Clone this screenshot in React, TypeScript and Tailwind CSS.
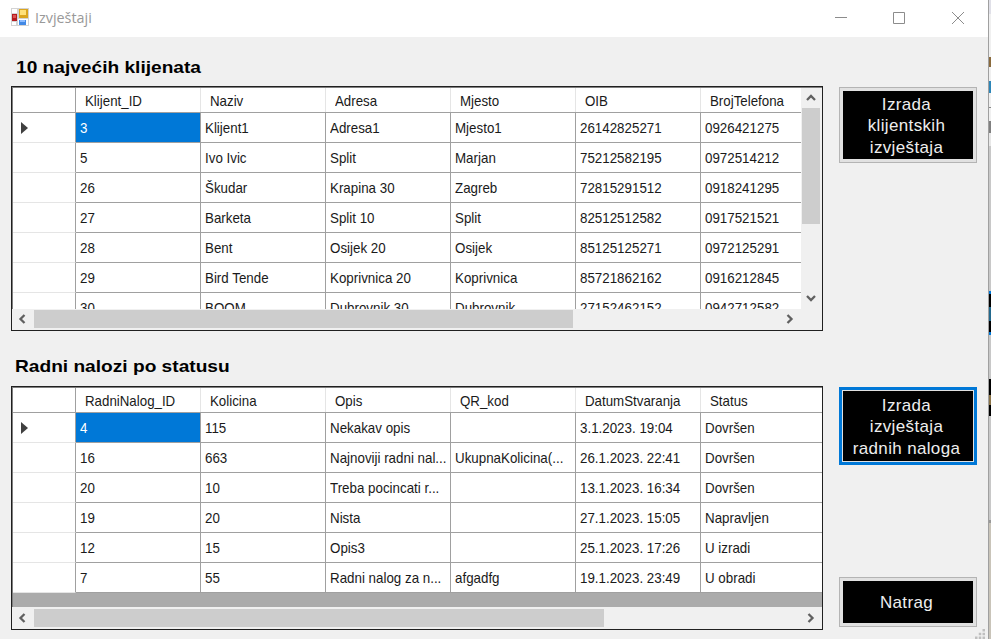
import type { ReactNode } from "react";

const clients = [
  ["3", "Klijent1", "Adresa1", "Mjesto1", "26142825271", "0926421275"],
  ["5", "Ivo Ivic", "Split", "Marjan", "75212582195", "0972514212"],
  ["26", "Škudar", "Krapina 30", "Zagreb", "72815291512", "0918241295"],
  ["27", "Barketa", "Split 10", "Split", "82512512582", "0917521521"],
  ["28", "Bent", "Osijek 20", "Osijek", "85125125271", "0972125291"],
  ["29", "Bird Tende", "Koprivnica 20", "Koprivnica", "85721862162", "0916212845"],
  ["30", "BOOM", "Dubrovnik 30", "Dubrovnik", "27152462152", "0942712582"],
];

const orders = [
  ["4", "115", "Nekakav opis", "", "3.1.2023. 19:04", "Dovršen"],
  ["16", "663", "Najnoviji radni nal...", "UkupnaKolicina(...", "26.1.2023. 22:41", "Dovršen"],
  ["20", "10", "Treba pocincati r...", "", "13.1.2023. 16:34", "Dovršen"],
  ["19", "20", "Nista", "", "27.1.2023. 15:05", "Napravljen"],
  ["12", "15", "Opis3", "", "25.1.2023. 17:26", "U izradi"],
  ["7", "55", "Radni nalog za n...", "afgadfg", "19.1.2023. 23:49", "U obradi"],
];

function Chevron({ dir }: { dir: "left" | "right" | "up" | "down" }) {
  const d = {
    left: "M8.5 2 4.5 6l4 4",
    right: "M3.5 2l4 4-4 4",
    up: "M2 8l4-4 4 4",
    down: "M2 4l4 4 4-4",
  }[dir];
  return (
    <svg viewBox="0 0 12 12" className="size-3 shrink-0" fill="none" stroke="#606060" strokeWidth="2.3">
      <path d={d} />
    </svg>
  );
}

function Grid({ headers, rows, children }: { headers: string[]; rows: string[][]; children?: ReactNode }) {
  return (
    <div className="min-w-0 flex-1 overflow-hidden">
      <div className="flex h-[25px] w-[813px] border-b border-[#a0a0a0] bg-white">
        <div className="w-[63px] shrink-0 border-r border-[#a0a0a0]" />
        {headers.map((h) => (
          <div key={h} className="w-[125px] shrink-0 border-r border-[#e5e5e5] pl-[9px] leading-[25px]">
            <span className="inline-block origin-left scale-x-[0.887] whitespace-nowrap">{h}</span>
          </div>
        ))}
      </div>
      {rows.map((row, i) => (
        <div key={row[0]} className="flex h-[30px] w-[813px] bg-white">
          <div className="flex w-[63px] shrink-0 items-center border-r border-b border-r-[#a0a0a0] border-b-[#e5e5e5] pl-2">
            {i === 0 && (
              <svg viewBox="0 0 7 12" className="h-3 w-[7px]" fill="#404040">
                <path d="M0 0l7 6-7 6z" />
              </svg>
            )}
          </div>
          {row.map((cell, j) => (
            <div
              key={j}
              className={
                "w-[125px] shrink-0 border-r border-b border-[#a0a0a0] pl-1 leading-[30px] " +
                (i === 0 && j === 0 ? "bg-[#0078d7] text-white" : "")
              }
            >
              <span className="inline-block origin-left scale-x-[0.89] whitespace-nowrap">{cell}</span>
            </div>
          ))}
        </div>
      ))}
      {children}
    </div>
  );
}

function ActionButton({ className, children }: { className: string; children: ReactNode }) {
  return (
    <button
      className={
        "flex w-[138px] items-center justify-center text-center text-[17px] leading-[21.5px] tracking-[0.35px] text-[#eee] " +
        className
      }
    >
      <span className="flex size-full items-center justify-center bg-black pt-0.5 pr-[3px]">{children}</span>
    </button>
  );
}

export default function App() {
  return (
    <div className="flex h-[639px] w-[991px] overflow-hidden bg-[#c8c8c8] font-['Liberation_Sans',Arial,sans-serif] text-[#1a1a1a]">
      <div className="flex w-[988px] shrink-0 flex-col bg-[#f0f0f0]">
        <header className="flex h-[37px] shrink-0 items-center bg-white pb-[3px] pl-[11px] text-[#999]">
          <svg viewBox="0 0 18 18" className="size-[18px]">
            <path d="M0 0h18v18H0z" fill="#d3d3d3" />
            <path d="M1 1h5v4H1zM1 14h4v3H1zM7 11h10v6H7z" fill="#fff" />
            <path d="M1 6h5v7H1z" fill="#b51b20" />
            <path d="M2 7h3v3H2z" fill="#dc5553" />
            <path d="M8 1h9v9H8z" fill="#dba51e" />
            <path d="M9 2h6v5H9z" fill="#ffe17a" />
            <path d="M8 12h7v5H8z" fill="#4289e5" />
            <path d="M9 12h5v2H9z" fill="#8cbcff" />
          </svg>
          <h1 className="ml-1.5 flex-1 pt-px font-['Open_Sans','Noto_Sans',sans-serif] text-[14.5px]">
            <span className="inline-block origin-left scale-x-[0.99]">Izvještaji</span>
          </h1>
          <svg viewBox="0 0 132 14" className="mt-0.5 mr-[23px] h-[14px] w-[132px]" fill="none" stroke="#8c8c8c">
            <path d="M2 6.5h12M60.5 1.5h11v11h-11z" />
            <path d="M119 1l12 12M131 1l-12 12" />
          </svg>
        </header>

        <div className="flex min-h-0 flex-1">
          <main className="ml-[11px] w-[812px] shrink-0 text-[15px]">
            <h2 className="h-[49px] pt-[19px] pl-[5px] text-[17px] leading-6 font-bold text-black">
              <span className="inline-block origin-left scale-x-[1.125] whitespace-nowrap">10 najvećih klijenata</span>
            </h2>
            <section className="flex h-[245px] flex-col border border-[#202020] bg-[#f0f0f0]">
              <div className="flex h-[222px] shrink-0 overflow-hidden border-t border-l border-[#808080]">
                <Grid
                  headers={["Klijent_ID", "Naziv", "Adresa", "Mjesto", "OIB", "BrojTelefona"]}
                  rows={clients}
                />
                <div className="flex w-[21px] shrink-0 flex-col items-center pr-px">
                  <div className="flex h-5 items-center">
                    <Chevron dir="up" />
                  </div>
                  <div className="h-[116px] w-[18px] bg-[#cdcdcd]" />
                  <div className="mt-auto mb-[5px]">
                    <Chevron dir="down" />
                  </div>
                </div>
              </div>
              <div className="flex flex-1 items-center pr-[26px] pb-0.5 pl-1">
                <Chevron dir="left" />
                <div className="ml-1.5 h-[18px] w-[539px] bg-[#cdcdcd]" />
                <span className="ml-auto flex">
                  <Chevron dir="right" />
                </span>
              </div>
            </section>

            <h2 className="h-[55px] pt-6 pl-1 text-[17px] leading-6 font-bold text-black">
              <span className="inline-block origin-left scale-x-[1.125] whitespace-nowrap">Radni nalozi po statusu</span>
            </h2>
            <section className="flex h-[244px] flex-col border border-[#202020] bg-[#f0f0f0]">
              <div className="flex h-[220px] shrink-0 overflow-hidden border-t border-l border-[#808080] bg-[#ababab]">
                <Grid
                  headers={["RadniNalog_ID", "Kolicina", "Opis", "QR_kod", "DatumStvaranja", "Status"]}
                  rows={orders}
                />
              </div>
              <div className="flex flex-1 items-center pr-[5px] pb-px pl-1">
                <Chevron dir="left" />
                <div className="ml-1.5 h-[18px] w-[570px] bg-[#cdcdcd]" />
                <span className="ml-auto flex">
                  <Chevron dir="right" />
                </span>
              </div>
            </section>
          </main>

          <aside className="ml-4 flex w-[149px] shrink-0 flex-col pt-[50px]">
            <ActionButton className="h-[76px] border border-[#b4b4b4] bg-[#e1e1e1] p-[3px]">
              Izrada
              <br />
              klijentskih
              <br />
              izvještaja
            </ActionButton>
            <ActionButton className="mt-[224px] h-[78px] border-[3px] border-[#0078d7] bg-[#e1e1e1] p-px">
              Izrada
              <br />
              izvještaja
              <br />
              radnih naloga
            </ActionButton>
            <ActionButton className="mt-[112px] h-[50px] border border-[#b4b4b4] bg-[#e1e1e1] p-[3px]">
              Natrag
            </ActionButton>
            <svg viewBox="0 0 12 12" className="mt-0.5 ml-[136px] h-[10px] w-[10px]" fill="#bfbfbf">
              <path d="M9 0h3v3H9zM9 4.5h3v3H9zM9 9h3v3H9zM4.5 4.5h3v3h-3zM4.5 9h3v3h-3zM0 9h3v3H0z" />
            </svg>
          </aside>
        </div>
      </div>

      <div className="flex w-[3px] shrink-0 flex-col border-l border-[#a0a0a0]">
        <div className="h-[14px] bg-[#e0e0e8]" />
        <div className="h-[43px] bg-[#f0f0f0]" />
        <div className="h-[10px] bg-[#8a6a3c]" />
        <div className="h-[14px] bg-[#f0f0f0]" />
        <div className="h-[12px] bg-[#2d86b8]" />
        <div className="h-[14px] bg-[#f0f0f0]" />
        <div className="h-px bg-[#888]" />
        <div className="h-[13px] bg-[#f0f0f0]" />
        <div className="h-[12px] bg-[#808080]" />
        <div className="h-[13px] bg-[#e8e8e8]" />
        <div className="h-[145px] bg-[#c8c8c8]" />
        <div className="h-[3px] bg-[#0078d7]" />
        <div className="h-[13px] bg-black" />
        <div className="h-[14px] bg-[#23698d]" />
        <div className="h-[11px] bg-black" />
        <div className="h-[3px] bg-[#0078d7]" />
        <div className="h-[44px] bg-[#c8c8c8]" />
        <div className="h-[16px] bg-black" />
        <div className="h-[10px] bg-[#8b7448]" />
        <div className="h-[11px] bg-black" />
        <div className="h-[104px] bg-[#c8c8c8]" />
        <div className="h-[3px] bg-[#999]" />
        <div className="flex-1 bg-[#c9c4b9]" />
      </div>
    </div>
  );
}
